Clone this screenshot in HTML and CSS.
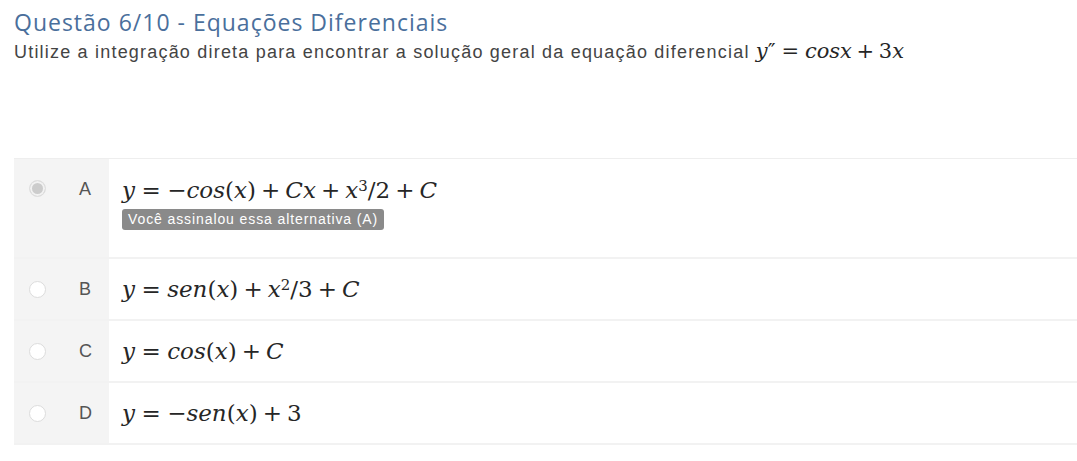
FILE: index.html
```html
<!DOCTYPE html>
<html lang="pt-BR">
	<head>
		<meta charset="UTF-8" />
		<meta name="viewport" content="width=device-width, initial-scale=1.0" />
		<title>Questão 6/10</title>
		<link rel="stylesheet" href="styles.css">
	</head>
	<body>
		<div class="question">
			<h2 class="title">Questão 6/10 - Equações Diferenciais</h2>
			<p class="statement">
				Utilize a integração direta para encontrar a solução geral da equação diferencial
				<span class="math small"><i>y</i>″<span class="rel">=</span><i>cosx</i><span class="bin">+</span>3<i>x</i></span>
			</p>
		</div>

		<ul class="options">
			<li class="option selected">
				<div class="side">
					<span class="radio"></span>
					<span class="letter">A</span>
				</div>
				<div class="body">
					<div class="math"><i>y</i><span class="rel">=</span>−<i>cos</i>(<i>x</i>)<span class="bin">+</span><i>Cx</i><span class="bin">+</span><i>x</i><sup>3</sup>/2<span class="bin">+</span><i>C</i></div>
					<span class="badge">Você assinalou essa alternativa (A)</span>
				</div>
			</li>
			<li class="option">
				<div class="side">
					<span class="radio"></span>
					<span class="letter">B</span>
				</div>
				<div class="body">
					<div class="math"><i>y</i><span class="rel">=</span><i>sen</i>(<i>x</i>)<span class="bin">+</span><i>x</i><sup>2</sup>/3<span class="bin">+</span><i>C</i></div>
				</div>
			</li>
			<li class="option">
				<div class="side">
					<span class="radio"></span>
					<span class="letter">C</span>
				</div>
				<div class="body">
					<div class="math"><i>y</i><span class="rel">=</span><i>cos</i>(<i>x</i>)<span class="bin">+</span><i>C</i></div>
				</div>
			</li>
			<li class="option">
				<div class="side">
					<span class="radio"></span>
					<span class="letter">D</span>
				</div>
				<div class="body">
					<div class="math"><i>y</i><span class="rel">=</span>−<i>sen</i>(<i>x</i>)<span class="bin">+</span>3</div>
				</div>
			</li>
		</ul>
	</body>
</html>
```

FILE: styles.css
```css
body {
	margin: 0;
	padding: 0 0 0 14px;
	background-color: #ffffff;
	font-family: "Liberation Sans", Arial, sans-serif;
	color: #333333;
}
.question {
	padding-top: 7px;
}
.title {
	margin: 0;
	font-family: "Open Sans", sans-serif;
	font-size: 23px;
	font-weight: normal;
	letter-spacing: 1px;
	line-height: 30px;
	color: #4a6f9c;
}
.statement {
	margin: 3px 0 0 0;
	font-size: 18px;
	letter-spacing: 1.2px;
	line-height: 22px;
	color: #444444;
}
.math {
	font-family: "DejaVu Serif", "Liberation Serif", serif;
	font-size: 23px;
	letter-spacing: 0;
	line-height: 30px;
	color: #262626;
	white-space: nowrap;
}
.math.small {
	font-size: 21px;
	line-height: 22px;
}
.math i {
	font-style: italic;
}
.math .rel {
	margin: 0 0.28em;
}
.math .bin {
	margin: 0 0.22em;
}
.math sup {
	font-size: 0.65em;
	line-height: 0;
	vertical-align: 0.5em;
}
.options {
	list-style: none;
	margin: 95px 0 0 0;
	padding: 0;
	border-top: 1px solid #eeeeee;
}
.option {
	display: flex;
	border-bottom: 2px solid #f2f2f2;
}
.side {
	width: 95px;
	flex-shrink: 0;
	display: flex;
	align-items: center;
	height: 30px;
	padding: 15px 0;
	background-color: #f4f4f4;
	box-sizing: content-box;
}
.option.selected .side {
	height: auto;
	align-items: flex-start;
	padding-top: 21px;
}
.radio {
	width: 15px;
	height: 15px;
	margin-left: 15px;
	border: 1px solid #dcdcdc;
	border-radius: 50%;
	background-color: #ffffff;
}
.option.selected .radio {
	border: 1px solid #e0e0e0;
	background-color: #cccccc;
	box-shadow: inset 0 0 0 2px #f2f2f2;
}
.letter {
	margin-left: 33px;
	font-size: 18px;
	letter-spacing: 1px;
	color: #555555;
}
.option.selected .letter {
	line-height: 18px;
}
.body {
	flex: 1;
	padding: 15px 0 15px 13px;
}
.option.selected .body {
	padding-top: 16px;
	padding-bottom: 27px;
}
.badge {
	display: inline-block;
	margin-top: 4px;
	padding: 3px 6px;
	border-radius: 3px;
	background-color: #8a8a8a;
	color: #ffffff;
	font-size: 14px;
	letter-spacing: 0.9px;
	line-height: 15px;
}
```
